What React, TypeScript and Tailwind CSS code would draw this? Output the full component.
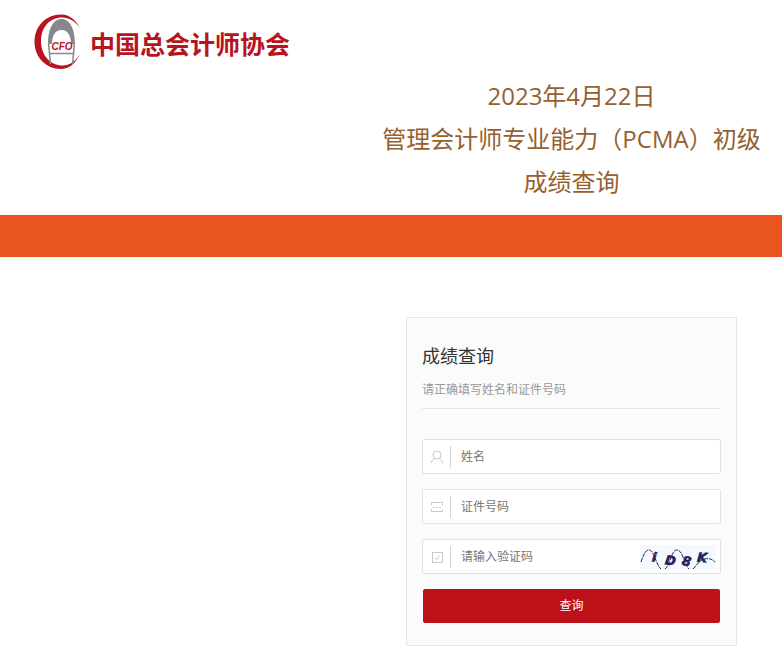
import { useState } from "react";
import type { FormEvent, ReactNode } from "react";

const TITLE_LINES = ["2023年4月22日", "管理会计师专业能力（PCMA）初级", "成绩查询"];

const Logo = () => (
  <a href="#" className="flex items-center gap-2 text-[#b8141f]">
    <svg width="48" height="56" viewBox="0 0 48 56" aria-label="CFO" role="img">
      {/* Outer crescent */}
      <path
        d="M46 14C41 5 35 0.500 27 0.500C12 0.500 0.500 12 0.500 28C0.500 43 12 55 27 55C35 55 41 50 46 40C41 48 35 51.500 29 51.500C16 51.500 7 41 7 27C7 13 16 3.500 28 3.500C35 3.500 41 7 46 14Z"
        fill="#b8141f"
      />
      {/* Arched figure in the middle */}
      <path
        d="M14 30C14 15 19 5 27.500 5C36 5 41 15 41 30L37 30C37 22 34 16 27.500 16C21 16 18 22 18 30Z"
        fill="#87888d"
      />
      <path d="M14.500 29L16.500 50M40.500 29L38.500 50" stroke="#87888d" strokeWidth="1.500" fill="none" />
      <path d="M16 39.500H39" stroke="#87888d" strokeWidth="1.500" />
      <text
        x="28"
        y="36"
        textAnchor="middle"
        fontFamily="Liberation Sans, sans-serif"
        fontSize="10"
        fontWeight="700"
        fontStyle="italic"
        fill="#b8141f"
      >
        CFO
      </text>
    </svg>
    <span className="pt-1 text-[25px] leading-9 font-bold whitespace-nowrap">中国总会计师协会</span>
  </a>
);

const UserIcon = () => (
  <svg width="14" height="14" viewBox="0 0 14 14" fill="none" stroke="#c9c9c9" aria-hidden="true">
    <circle cx="7" cy="5" r="4" />
    <path d="M5 8.500C3 9 1.500 10.500 1 13M9 8.500C11 9 12.500 10.500 13 13" />
  </svg>
);

const CardIcon = () => (
  <svg width="14" height="14" viewBox="0 0 14 14" fill="none" stroke="#c9c9c9" aria-hidden="true">
    <path d="M1.500 5V2.500H12.500V5M1.500 9V11.500H12.500V9" />
    <path d="M3 7.500H5M6 7.500H8M9 7.500H11" />
  </svg>
);

const CheckIcon = () => (
  <svg width="14" height="14" viewBox="0 0 14 14" fill="none" stroke="#c9c9c9" aria-hidden="true">
    <rect x="2.500" y="2.500" width="10" height="10" />
    <path d="M5 7.500L7 9.500L9.500 5.500" />
  </svg>
);

const Captcha = () => (
  <svg width="76" height="24" viewBox="0 0 76 24" role="img" aria-label="验证码">
    <rect width="76" height="24" fill="#f3f9fe" />
    <path
      d="M1 17C4 8 6 5 9 5C14 5 16 20 21 24M25 24C31 19 31 5 37 5C43 5 44 20 49 24M53 24C58 19 60 14 65 14C69 13 72 14 75 17"
      fill="none"
      stroke="#251d58"
      strokeWidth="1"
      strokeDasharray="4 1"
    />
    <g
      fill="#251d58"
      stroke="#251d58"
      strokeWidth="0.500"
      fontFamily="DejaVu Sans, sans-serif"
      fontWeight="700"
      fontStyle="italic"
      fontSize="13"
    >
      <text x="12" y="17" transform="rotate(6 16 12)">i</text>
      <text x="25" y="20" transform="rotate(8 31 16)">D</text>
      <text x="42" y="21" transform="rotate(12 47 17)">8</text>
      <text x="57" y="17" transform="rotate(4 62 13)">K</text>
    </g>
  </svg>
);

interface FieldProps {
  id: string;
  label: string;
  icon: ReactNode;
  value: string;
  onChange: (value: string) => void;
  children?: ReactNode;
}

const Field = ({ id, label, icon, value, onChange, children }: FieldProps) => (
  <div className="flex h-[35px] items-center rounded-xs border border-[#e1e1e1] bg-white pr-1">
    <label
      htmlFor={id}
      aria-label={label}
      className="flex h-[22px] w-7 shrink-0 items-center justify-center border-r border-[#d5d5d5]"
    >
      {icon}
    </label>
    <input
      id={id}
      type="text"
      aria-label={label}
      placeholder={label}
      value={value}
      onChange={(e) => onChange(e.target.value)}
      className="h-full min-w-0 flex-1 px-[10px] text-xs text-[#333] outline-none placeholder:text-[#757575]"
    />
    {children}
  </div>
);

const App = () => {
  const [name, setName] = useState("");
  const [idNumber, setIdNumber] = useState("");
  const [code, setCode] = useState("");

  const handleSubmit = (e: FormEvent) => e.preventDefault();

  return (
    <div className="min-h-screen bg-white font-['Open_Sans','Noto_Sans_CJK_SC',sans-serif]">
      <header className="flex items-start justify-between pb-3">
        <div className="pt-[14px] pl-[34px]">
          <Logo />
        </div>
        <h1 className="w-[421px] shrink-0 pt-[74px] text-center text-2xl leading-[43px] text-[#96602f]">
          {TITLE_LINES.map((line) => (
            <span key={line} className="block whitespace-nowrap">
              {line}
            </span>
          ))}
        </h1>
      </header>

      <div className="h-[42px] bg-[#e9541f]" />

      <main className="flex justify-end pt-[60px] pr-[45px] pb-[14px]">
        <form
          onSubmit={handleSubmit}
          className="w-[331px] border border-[#e6e6e6] bg-[#fbfbfb] px-[15px] pt-6 pb-[22px]"
        >
          <div className="border-b border-[#e6e6e6] pb-2">
            <h2 className="text-lg leading-7 text-[#333]">成绩查询</h2>
            <p className="pt-[10px] text-xs leading-5 text-[#999]">请正确填写姓名和证件号码</p>
          </div>

          <div className="flex flex-col gap-[15px] pt-[30px]">
            <Field id="name" label="姓名" icon={<UserIcon />} value={name} onChange={setName} />
            <Field id="id-number" label="证件号码" icon={<CardIcon />} value={idNumber} onChange={setIdNumber} />
            <Field id="code" label="请输入验证码" icon={<CheckIcon />} value={code} onChange={setCode}>
              <button type="button" className="shrink-0">
                <Captcha />
              </button>
            </Field>
            <button type="submit" className="mx-px h-[34px] rounded-xs bg-[#bd111a] text-xs text-white">
              查询
            </button>
          </div>
        </form>
      </main>
    </div>
  );
};

export default App;
